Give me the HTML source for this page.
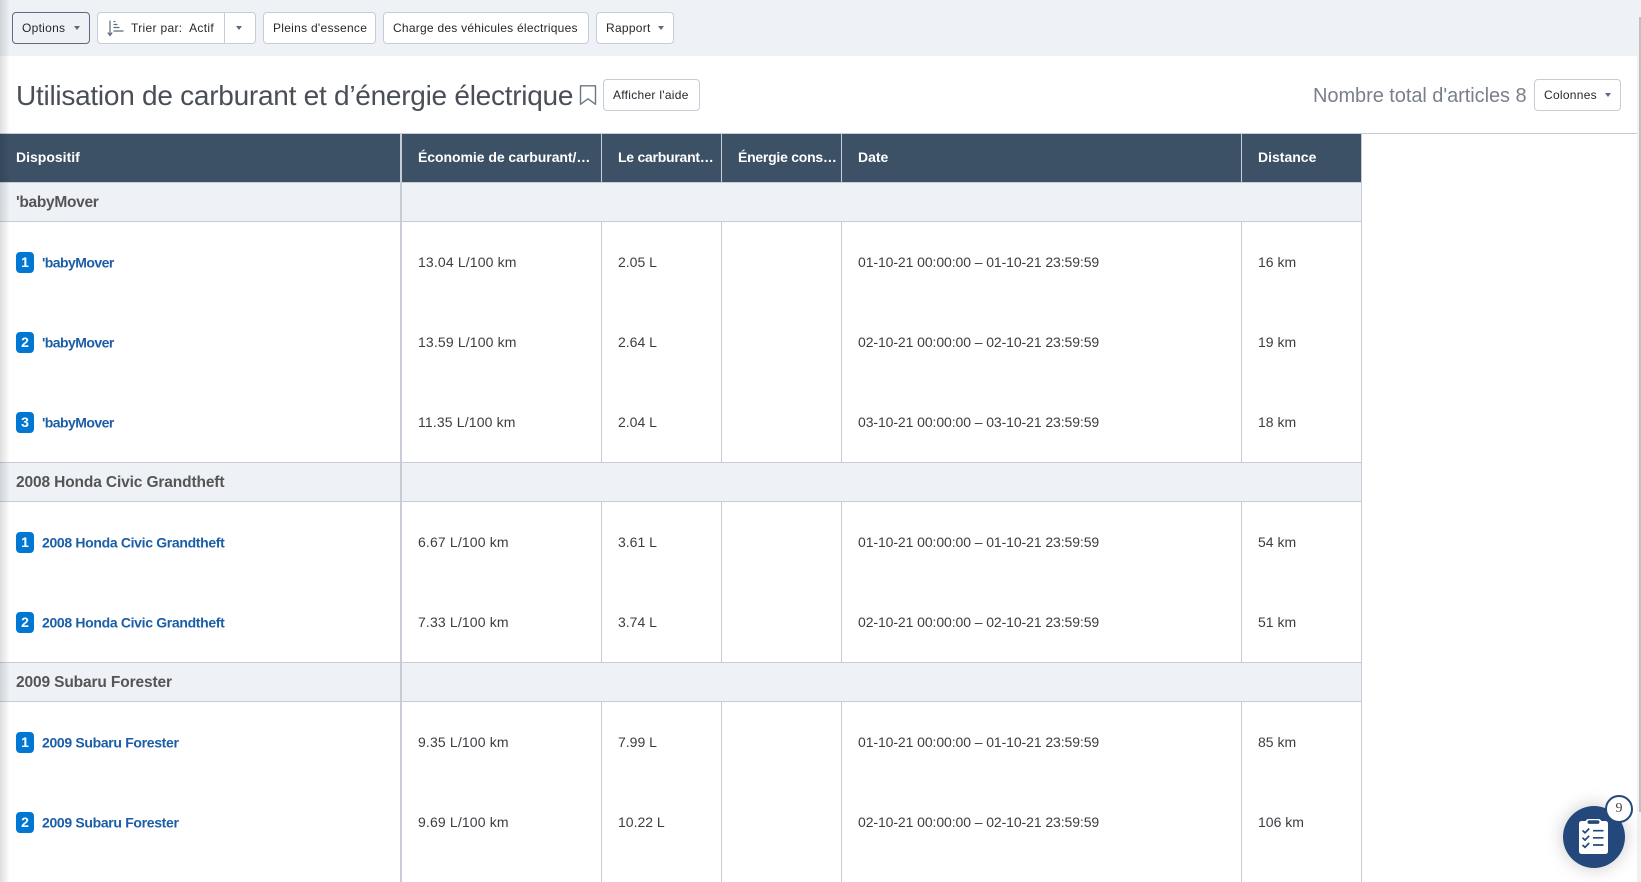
<!DOCTYPE html>
<html lang="fr">
<head>
<meta charset="utf-8">
<title>Utilisation de carburant et d'énergie électrique</title>
<style>
html,body{margin:0;padding:0;width:1641px;height:882px;overflow:hidden;background:#fff;font-family:"Liberation Sans",sans-serif;color:#25282d}
#app{position:absolute;left:0;top:0;width:1641px;height:882px;overflow:hidden;background:#fff}
.toolbar{position:absolute;left:0;top:0;width:1637px;height:56px;background:#eef1f6}
.btn{position:absolute;box-sizing:border-box;height:32px;top:12px;background:#fff;border:1px solid #c8ccd6;border-radius:4px;font-size:12px;letter-spacing:.28px;line-height:31px;white-space:nowrap;padding-left:9px;color:#25282d}
.caret{position:absolute;width:0;height:0;border-left:3.500px solid transparent;border-right:3.500px solid transparent;border-top:4.500px solid #5b6b80}
.title{position:absolute;left:16px;top:77px;font-size:28px;line-height:38px;color:#4a4f57;white-space:nowrap;letter-spacing:-.26px}
.total{position:absolute;left:1313px;top:83px;font-size:20px;line-height:26px;color:#7a808a;white-space:nowrap;letter-spacing:-.06px}
table{position:absolute;left:0;top:133px;border-collapse:separate;border-spacing:0;table-layout:fixed;width:1362px}
td,th{box-sizing:border-box;padding:0 0 0 16px;white-space:nowrap;overflow:hidden;text-align:left;font-size:14px;border-right:1px solid #c8ccd6}
th{height:50px;padding-bottom:2px;background:#3d5166;color:#fff;font-weight:bold;border-top:1px solid #c8ccd6;border-bottom:1px solid #c8ccd6;border-right-color:#c8ccd6}
th.n{letter-spacing:-.25px}
th.m{letter-spacing:-.05px}
.g td{height:39px;padding-top:1px;background:#eef1f6;border-bottom:1px solid #c8ccd6;font-size:15.5px;font-weight:bold;color:#555;letter-spacing:-.13px}
.r td{height:80px;color:#3a3d42}
.r.l td{height:81px;border-bottom:1px solid #c8ccd6}
.r.f td{height:20px}
.r td.e{letter-spacing:.15px}
.r td.d{letter-spacing:-.09px}
td:first-child,th:first-child{border-right:2px solid #c8ccd6}
.badge{display:inline-block;width:18px;height:21px;border-radius:4px;background:#0078d3;color:#fff;font-weight:bold;font-size:14px;line-height:21px;text-align:center;margin-right:8px;vertical-align:middle}
.lnk{color:#1b5ea8;font-weight:bold;font-size:14px;vertical-align:middle;letter-spacing:-.33px}
.lnk.b{letter-spacing:-.55px}
.shadow{position:absolute;left:0;top:0;width:10px;height:882px;background:linear-gradient(to right,rgba(0,0,0,.13),rgba(0,0,0,0))}
.track{position:absolute;left:1637px;top:0;width:4px;height:882px;background:#f1f1f1}
.thumb{position:absolute;left:1639px;top:17px;width:2px;height:795px;background:#c1c1c1}
.badge9{position:absolute;left:1605px;top:795px;width:28px;height:28px;box-sizing:border-box;border:2px solid #24477c;border-radius:50%;background:#fff;font-family:"Liberation Serif",serif;font-size:14px;line-height:24px;text-align:center;color:#444}
</style>
</head>
<body>
<div id="app">
<div class="toolbar">
  <div class="btn" style="left:12px;width:78px;border-color:#5b6b80;background:#eef1f6">Options<span class="caret" style="left:61px;top:13px"></span></div>
  <div class="btn" style="left:97px;width:159px;padding-left:33px;letter-spacing:.32px">Trier par:&nbsp; Actif
    <svg style="position:absolute;left:9px;top:6px" width="18" height="18" viewBox="0 0 18 18" fill="none" stroke="#5b6b80" stroke-width="1.2"><path d="M3 1.5V16M.8 13.5 3 16.5l2.2-3"/><path d="M6.5 2.5h2M6.5 5.5h4M6.5 8.500h6M6.500 12h10"/></svg>
    <span style="position:absolute;left:126px;top:0;width:1px;height:30px;background:#c8ccd6"></span>
    <span class="caret" style="left:138px;top:13px"></span>
  </div>
  <div class="btn" style="left:263px;width:113px">Pleins d'essence</div>
  <div class="btn" style="left:383px;width:206px;letter-spacing:.25px">Charge des véhicules électriques</div>
  <div class="btn" style="left:596px;width:78px">Rapport<span class="caret" style="left:61px;top:13px"></span></div>
</div>

<div class="title">Utilisation de carburant et d’énergie électrique</div>
<svg style="position:absolute;left:578px;top:84px" width="20" height="22" viewBox="0 0 20 22" fill="none" stroke="#6b7786" stroke-width="1.4"><path d="M2.500 1.800h15v18.500l-7.500-5.500-7.500 5.500z" stroke-linejoin="round"/></svg>
<div class="btn" style="left:603px;top:79px;width:97px">Afficher l'aide</div>
<div class="total">Nombre total d'articles 8</div>
<div class="btn" style="left:1534px;top:79px;width:87px">Colonnes<span class="caret" style="left:70px;top:13px"></span></div>
<div style="position:absolute;left:0;top:133px;width:1637px;height:1px;background:#c8ccd6"></div>

<table>
  <colgroup><col style="width:402px"><col style="width:200px"><col style="width:120px"><col style="width:120px"><col style="width:400px"><col style="width:120px"></colgroup>
  <tr><th>Dispositif</th><th class="m">Économie de carburant/…</th><th class="n">Le carburant…</th><th class="n">Énergie cons…</th><th>Date</th><th>Distance</th></tr>

  <tr class="g"><td style="letter-spacing:-.3px">'babyMover</td><td colspan="5"></td></tr>
  <tr class="r"><td><span class="badge">1</span><span class="lnk b">'babyMover</span></td><td class="e">13.04 L/100 km</td><td>2.05 L</td><td></td><td class="d">01-10-21 00:00:00 – 01-10-21 23:59:59</td><td>16 km</td></tr>
  <tr class="r"><td><span class="badge">2</span><span class="lnk b">'babyMover</span></td><td class="e">13.59 L/100 km</td><td>2.64 L</td><td></td><td class="d">02-10-21 00:00:00 – 02-10-21 23:59:59</td><td>19 km</td></tr>
  <tr class="r l"><td><span class="badge">3</span><span class="lnk b">'babyMover</span></td><td class="e">11.35 L/100 km</td><td>2.04 L</td><td></td><td class="d">03-10-21 00:00:00 – 03-10-21 23:59:59</td><td>18 km</td></tr>

  <tr class="g"><td>2008 Honda Civic Grandtheft</td><td colspan="5"></td></tr>
  <tr class="r"><td><span class="badge">1</span><span class="lnk">2008 Honda Civic Grandtheft</span></td><td class="e">6.67 L/100 km</td><td>3.61 L</td><td></td><td class="d">01-10-21 00:00:00 – 01-10-21 23:59:59</td><td>54 km</td></tr>
  <tr class="r l"><td><span class="badge">2</span><span class="lnk">2008 Honda Civic Grandtheft</span></td><td class="e">7.33 L/100 km</td><td>3.74 L</td><td></td><td class="d">02-10-21 00:00:00 – 02-10-21 23:59:59</td><td>51 km</td></tr>

  <tr class="g"><td>2009 Subaru Forester</td><td colspan="5"></td></tr>
  <tr class="r"><td><span class="badge">1</span><span class="lnk">2009 Subaru Forester</span></td><td class="e">9.35 L/100 km</td><td>7.99 L</td><td></td><td class="d">01-10-21 00:00:00 – 01-10-21 23:59:59</td><td>85 km</td></tr>
  <tr class="r"><td><span class="badge">2</span><span class="lnk">2009 Subaru Forester</span></td><td class="e">9.69 L/100 km</td><td>10.22 L</td><td></td><td class="d">02-10-21 00:00:00 – 02-10-21 23:59:59</td><td>106 km</td></tr>
  <tr class="r f"><td></td><td></td><td></td><td></td><td></td><td></td></tr>
</table>

<div class="shadow"></div>
<div class="track"></div>
<div class="thumb"></div>

<div style="position:absolute;left:1563px;top:806px;width:62px;height:62px;border-radius:50%;background:#24477c;box-shadow:0 0 18px rgba(0,0,0,.22)"></div>
<svg style="position:absolute;left:1579px;top:819px" width="29" height="35" viewBox="0 0 29 35">
  <rect x="0" y="2" width="29" height="33" rx="2.500" fill="#fff"/>
  <rect x="6.500" y="0" width="16" height="7" rx="3" fill="#fff"/>
  <rect x="8.500" y="1.300" width="12" height="3.600" rx="1.800" fill="#24477c"/>
  <path d="M3.500 11.500l2.500 2.300 4.200-4.300M3.500 18.800l2.500 2.300 4.200-4.300M3.500 26l2.500 2.300 4.200-4.300" fill="none" stroke="#24477c" stroke-width="1.700"/>
  <path d="M14 11.700h10.500M14 18.800h10.500M14 26h10.500" stroke="#24477c" stroke-width="1.700"/>
</svg>
<div class="badge9">9</div>
</div>
</body>
</html>
